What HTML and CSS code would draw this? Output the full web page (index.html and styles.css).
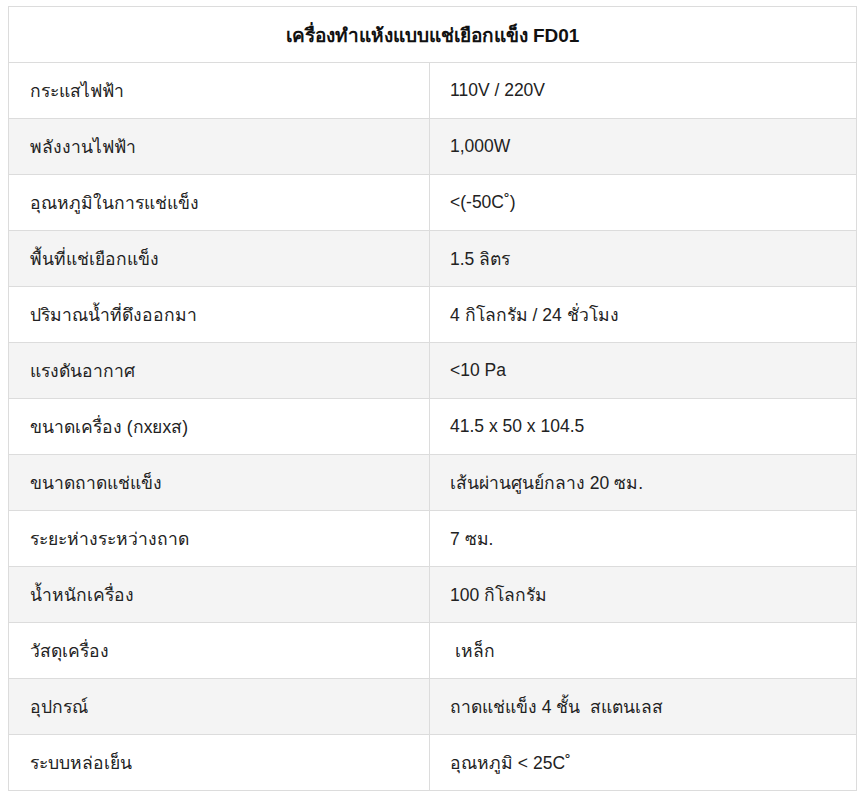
FILE: index.html
```html
<!DOCTYPE html>
<html lang="th">
<head>
<meta charset="utf-8">
<link rel="stylesheet" href="styles.css">
</head>
<body>
<table class="spec">
  <colgroup>
    <col class="col-key">
    <col class="col-val">
  </colgroup>
  <thead>
    <tr><th colspan="2">เครื่องทำแห้งแบบแช่เยือกแข็ง FD01</th></tr>
  </thead>
  <tbody>
    <tr><td class="k">กระแสไฟฟ้า</td><td>110V / 220V</td></tr>
    <tr><td class="k">พลังงานไฟฟ้า</td><td>1,000W</td></tr>
    <tr><td class="k">อุณหภูมิในการแช่แข็ง</td><td>&lt;(-50C˚)</td></tr>
    <tr><td class="k">พื้นที่แช่เยือกแข็ง</td><td>1.5 ลิตร</td></tr>
    <tr><td class="k">ปริมาณน้ำที่ดึงออกมา</td><td>4 กิโลกรัม / 24 ชั่วโมง</td></tr>
    <tr><td class="k">แรงดันอากาศ</td><td>&lt;10 Pa</td></tr>
    <tr><td class="k">ขนาดเครื่อง (กxยxส)</td><td>41.5 x 50 x 104.5</td></tr>
    <tr><td class="k">ขนาดถาดแช่แข็ง</td><td>เส้นผ่านศูนย์กลาง 20 ซม.</td></tr>
    <tr><td class="k">ระยะห่างระหว่างถาด</td><td>7 ซม.</td></tr>
    <tr><td class="k">น้ำหนักเครื่อง</td><td>100 กิโลกรัม</td></tr>
    <tr><td class="k">วัสดุเครื่อง</td><td>&nbsp;เหล็ก</td></tr>
    <tr><td class="k">อุปกรณ์</td><td>ถาดแช่แข็ง 4 ชั้น&nbsp; สแตนเลส</td></tr>
    <tr><td class="k">ระบบหล่อเย็น</td><td>อุณหภูมิ &lt; 25C˚</td></tr>
  </tbody>
</table>
</body>
</html>
```

FILE: styles.css
```css
html, body {
  margin: 0;
  padding: 0;
  background: #ffffff;
}
body {
  padding: 6px 10px 0 8px;
  font-family: "Liberation Sans", Arial, "Noto Sans", "Noto Sans CJK SC", sans-serif;
  color: #222222;
}
.spec {
  width: 849px;
  border-collapse: collapse;
  table-layout: fixed;
  font-size: 17.5px;
}
.col-key {
  width: 421px;
}
.spec th,
.spec td {
  border: 1px solid #dcdcdc;
  height: 56px;
  box-sizing: border-box;
  vertical-align: middle;
  text-align: left;
  padding: 0 20px;
  font-weight: normal;
}
.spec th {
  text-align: center;
  font-weight: bold;
  font-size: 19px;
  color: #111111;
}
.spec td.k {
  padding-left: 21px;
}
.spec tbody tr:nth-child(even) td {
  background: #f4f4f4;
}
```
